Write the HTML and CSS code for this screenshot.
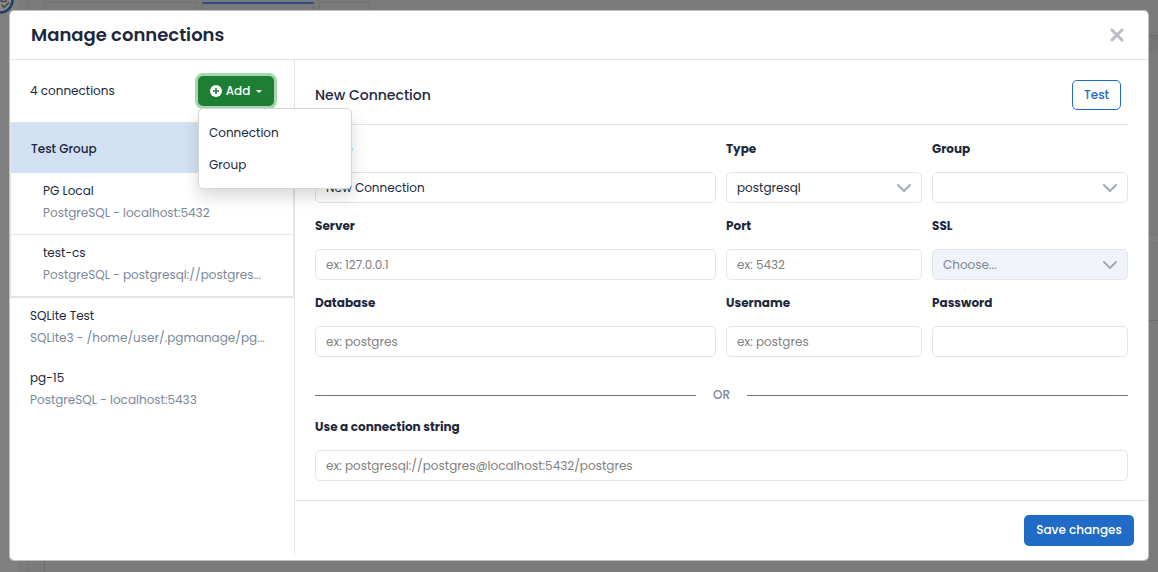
FILE: index.html
```html
<!DOCTYPE html>
<html lang="en">
<head>
<meta charset="utf-8">
<meta name="viewport" content="width=device-width, initial-scale=1">
<title>Manage connections</title>
<link rel="stylesheet" href="styles.css">
</head>
<body>
<div class="workspace" aria-hidden="true">
  <div class="rail"></div>
  <div class="panes">
    <div class="tabs"><span class="tab tab-wide"></span><span class="tab tab-active"></span><span class="tab tab-small"></span></div>
    <div class="pane"></div>
  </div>
  <div class="edge"><div class="edge-top"></div><div class="edge-head"></div><div class="edge-mid"></div><div class="edge-gap"></div><div class="edge-low"></div></div>
  <svg class="brand" viewBox="0 0 30 30"><circle cx="15" cy="15" r="12.5" fill="#898989" stroke="#1d3e6b" stroke-width="2.5"/><path d="M16.500 19.500l2.500 3 5-5" fill="none" stroke="#4d4d4d" stroke-width="1.800"/><path d="M15 13v4M17 13v3.500h4V13" fill="none" stroke="#4d4d4d" stroke-width="1.500"/></svg>
</div>
<div class="backdrop">
  <section class="modal" role="dialog" aria-labelledby="modal-title">
    <header class="modal-header">
      <h1 id="modal-title">Manage connections</h1>
      <button class="close" type="button" aria-label="Close"><svg viewBox="0 0 14 14"><path d="M2 2l10 10M12 2L2 12"/></svg></button>
    </header>
    <div class="modal-body">
      <aside class="sidebar">
        <div class="toolbar">
          <span>4 connections</span>
          <div class="dropdown">
            <button class="btn btn-add" type="button" aria-expanded="true">
              <svg class="plus" viewBox="0 0 12 12"><circle cx="6" cy="6" r="6" fill="#fff"/><path d="M6 3v6M3 6h6" stroke="#1e7e34" stroke-width="1.5"/></svg>
              Add
              <svg class="caret" viewBox="0 0 6 3"><path d="M0 0h6L3 3z" fill="#fff"/></svg>
            </button>
            <div class="menu">
              <button type="button">Connection</button>
              <button type="button">Group</button>
            </div>
          </div>
        </div>
        <div class="group">
          <h2>Test Group</h2>
          <div class="item"><p class="name">PG Local</p><p class="detail">PostgreSQL - localhost:5432</p></div>
          <div class="item"><p class="name">test-cs</p><p class="detail">PostgreSQL - postgresql://postgres...</p></div>
        </div>
        <div class="entry"><p class="name">SQLite Test</p><p class="detail">SQLite3 - /home/user/.pgmanage/pg...</p></div>
        <div class="entry"><p class="name">pg-15</p><p class="detail">PostgreSQL - localhost:5433</p></div>
      </aside>
      <form class="content">
        <div class="form">
          <div class="form-head">
            <h2>New Connection</h2>
            <button class="btn btn-outline" type="button">Test</button>
          </div>
          <div class="fields">
            <div class="field"><label for="name">Name</label><input id="name" type="text" value="New Connection"></div>
            <div class="field"><label for="type">Type</label><select id="type"><option>postgresql</option></select></div>
            <div class="field"><label for="group">Group</label><select id="group"><option></option></select></div>
            <div class="field"><label for="server">Server</label><input id="server" type="text" placeholder="ex: 127.0.0.1"></div>
            <div class="field"><label for="port">Port</label><input id="port" type="text" placeholder="ex: 5432"></div>
            <div class="field"><label for="ssl">SSL</label><select id="ssl" disabled><option>Choose...</option></select></div>
            <div class="field"><label for="database">Database</label><input id="database" type="text" placeholder="ex: postgres"></div>
            <div class="field"><label for="username">Username</label><input id="username" type="text" placeholder="ex: postgres"></div>
            <div class="field"><label for="password">Password</label><input id="password" type="password"></div>
          </div>
          <div class="divider">OR</div>
          <div class="field"><label for="string">Use a connection string</label><input id="string" type="text" placeholder="ex: postgresql://postgres@localhost:5432/postgres"></div>
        </div>
        <footer><button class="btn btn-primary" type="button">Save changes</button></footer>
      </form>
    </div>
  </section>
</div>
</body>
</html>
```
FILE: styles.css
```css
* { box-sizing: border-box; }
html, body { height: 100%; }
body {
  margin: 0;
  overflow: hidden;
  background: #7a7a7a;
  color: #1c273c;
  font: 12px/20px Poppins, Inter, "Open Sans", sans-serif;
}
h1, h2, p { margin: 0; }
button, input, select { font: inherit; color: inherit; }

/* Dimmed workspace behind the dialog */
.workspace { position: absolute; inset: 0; display: flex; }
.rail { width: 28px; background: #808080; border-right: 1px solid #737373; box-shadow: inset -9px 0 #7c7c7c; }
.panes { flex: 1; display: flex; flex-direction: column; padding: 2px 0 0 16px; }
.tabs { display: flex; gap: 5px; height: 10px; }
.tab { border: 1px solid #707070; }
.tab-wide { width: 153px; }
.tab-active { width: 112px; border-top: 2px solid #2b4f86; }
.tab-small { width: 51px; }
.pane { flex: 1; border-left: 1px solid #6c6c6c; }
.edge { width: 10px; display: flex; flex-direction: column; }
.edge-top { height: 36px; border-bottom: 1px solid #6c6c6c; }
.edge-head { height: 15px; background: #767676; }
.edge-mid { height: 185px; }
.edge-gap { height: 5px; background: #808080; }
.edge-low { height: 80px; border-bottom: 1px solid #6c6c6c; }
.brand { position: absolute; top: -15px; left: -15px; width: 30px; height: 30px; }

.backdrop { position: relative; min-height: 100%; display: flex; padding: 10px 9px 11px; }
.modal {
  flex: 1;
  min-width: 0;
  display: flex;
  flex-direction: column;
  background: #fff;
  background-clip: padding-box;
  border: 1px solid rgba(210, 210, 210, .8);
  border-radius: 5px;
}
.modal-header {
  display: flex;
  align-items: center;
  justify-content: space-between;
  height: 49px;
  padding: 0 24px 0 21px;
  border-bottom: 1px solid #e5e5e5;
}
h1 { font-size: 18px; line-height: 28px; font-weight: 600; }
.close { display: flex; padding: 0; border: 0; background: none; }
.close svg { width: 14px; height: 14px; fill: none; stroke: #babcc2; stroke-width: 3; stroke-linecap: round; }
.modal-body { flex: 1; display: flex; padding-bottom: 5px; }

.sidebar { flex: 0 0 285px; min-width: 0; border-right: 1px solid #e5e5e5; }
.toolbar {
  display: flex;
  align-items: center;
  justify-content: space-between;
  height: 62px;
  padding: 0 20px;
}
.dropdown { position: relative; }
.btn {
  display: flex;
  align-items: center;
  justify-content: center;
  height: 30px;
  padding: 0 10px;
  border: 1px solid transparent;
  border-radius: 5px;
  font-weight: 500;
  white-space: nowrap;
}
.btn-add { width: 76px; gap: 4px; background: #1e7e34; color: #fff; box-shadow: 0 0 0 3px #a5d8b1; }
.plus { width: 12px; height: 12px; }
.caret { width: 6px; height: 3px; margin-left: 2px; }
.menu {
  position: absolute;
  z-index: 2;
  top: 100%;
  left: 0;
  width: 154px;
  margin-top: 2px;
  padding: 8px 0 7px;
  background: #fff;
  border: 1px solid #d6d6d6;
  border-radius: 5px;
  box-shadow: 0 8px 16px rgba(0, 0, 0, .15);
}
.menu button { display: block; width: 100%; height: 32px; padding: 0 10px; border: 0; background: none; text-align: left; }

.group { border: 1px solid #e5e5e5; border-bottom-width: 2px; }
.group h2 { height: 50px; padding: 1px 20px 0; background: #d2e0f3; font-size: 12px; line-height: 50px; font-weight: 500; }
.item { height: 61px; padding: 7px 24px 0 32px; }
.item + .item { height: 62px; border-top: 1px solid #e5e5e5; }
.entry { height: 62px; padding: 7px 20px 0; }
.name, .detail { line-height: 22px; overflow: hidden; white-space: nowrap; text-overflow: ellipsis; }
.detail { color: #7b8799; }

.content { flex: 1; min-width: 0; display: flex; flex-direction: column; }
.form { flex: 1; padding: 0 20px; }
.form-head {
  display: flex;
  align-items: center;
  justify-content: space-between;
  height: 65px;
  padding: 6px 7px 0 0;
  border-bottom: 1px solid #e5e5e5;
}
.form-head h2 { font-size: 14px; line-height: 22px; font-weight: 500; }
.btn-outline { width: 49px; background: #fff; border-color: #1f6bc5; color: #1f6bc5; }
.fields { display: grid; grid-template-columns: 401fr 196fr 196fr; gap: 13px 10px; padding-top: 14px; }
.field { display: grid; gap: 13px; min-width: 0; }
label { font-weight: 700; }
input, select {
  width: 100%;
  height: 31px;
  padding: 0 10px;
  background: #fff;
  border: 1px solid #e3e5e8;
  border-radius: 5px;
}
input::placeholder { color: #808080; opacity: 1; }
select {
  appearance: none;
  background: #fff url("data:image/svg+xml,%3Csvg xmlns='http://www.w3.org/2000/svg' viewBox='0 0 14 8'%3E%3Cpath d='M1 1l6 6 6-6' fill='none' stroke='%23a4a9b1' stroke-width='2' stroke-linecap='round'/%3E%3C/svg%3E") no-repeat right 10px center / 14px 8px;
}
select:disabled { background-color: #f0f3f9; color: #7b8799; opacity: 1; }
.divider { display: flex; align-items: center; gap: 17px; padding: 28px 0 12px; color: #7b8799; font-weight: 500; }
.divider::before, .divider::after { content: ""; flex: 1; height: 1px; background: #6d7890; }
footer { display: flex; align-items: center; justify-content: flex-end; height: 55px; padding: 4px 14px 0; border-top: 1px solid #e5e5e5; }
.btn-primary { width: 110px; height: 31px; background: #1f6bc5; color: #fff; }
```
